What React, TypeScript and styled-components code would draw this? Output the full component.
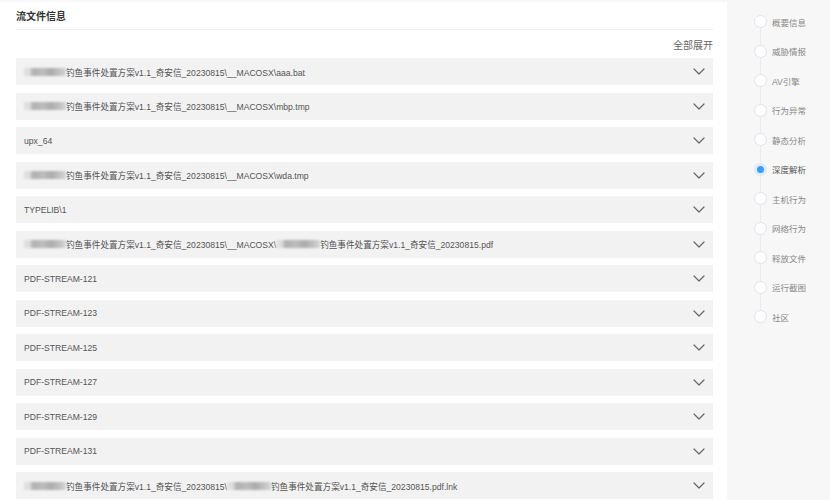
import React from "react";
import styled, { createGlobalStyle } from "styled-components";

const GlobalStyle = createGlobalStyle`
  html, body {
    margin: 0;
    padding: 0;
    background: #f7f7f7;
    font-family: "Liberation Sans", "Noto Sans CJK SC", Arial, sans-serif;
  }
`;

const Page = styled.div`
  display: flex;
  width: 830px;
  height: 500px;
  overflow: hidden;
`;

const Main = styled.section`
  width: 727px;
  margin-top: 2px;
  background: #fff;
  padding: 0 14px 0 16px;
  box-sizing: border-box;
`;

const Header = styled.div`
  height: 27px;
  border-bottom: 1px solid #f0f0f0;
  display: flex;
  align-items: center;
  font-size: 10px;
  font-weight: 700;
  color: #333;
`;

const Toolbar = styled.div`
  height: 28px;
  display: flex;
  align-items: center;
  justify-content: flex-end;
  font-size: 10px;
  color: #666;
  cursor: pointer;
`;

const List = styled.div`
  display: flex;
  flex-direction: column;
  gap: 7.5px;
`;

const Row = styled.div`
  height: 27px;
  flex-shrink: 0;
  background: #f2f2f2;
  display: flex;
  align-items: center;
  justify-content: space-between;
  padding: 0 8px;
  font-size: 8.6px;
  color: #555;
  white-space: nowrap;
`;

const Name = styled.span`
  display: flex;
  align-items: center;
`;

const Redact = styled.span<{ $w: number }>`
  display: inline-block;
  width: ${(p) => p.$w}px;
  height: 8px;
  background: linear-gradient(
    90deg,
    #e0e0e0 0%,
    #e0e0e0 12%,
    #b0b0b0 22%,
    #bdbdbd 45%,
    #acacac 65%,
    #c6c6c6 88%,
    #d8d8d8 100%
  );
  filter: blur(1px);
`;

const Chevron = () => (
  <svg width="12" height="7" viewBox="0 0 12 7">
    <polyline
      points="1,1 6,6 11,1"
      fill="none"
      stroke="#666"
      strokeWidth="1.2"
      strokeLinecap="round"
      strokeLinejoin="round"
    />
  </svg>
);

const Aside = styled.nav`
  flex: 1;
  padding: 7px 0 0 27px;
`;

const Step = styled.div<{ $last?: boolean }>`
  position: relative;
  height: 29.5px;
  display: flex;
  align-items: center;
  gap: 5px;

  &::after {
    content: "";
    display: ${(p) => (p.$last ? "none" : "block")};
    position: absolute;
    left: 6px;
    top: 50%;
    height: 100%;
    width: 1px;
    background: #ebebeb;
  }
`;

const Dot = styled.span<{ $active?: boolean }>`
  position: relative;
  z-index: 1;
  width: 13px;
  height: 13px;
  box-sizing: border-box;
  border-radius: 50%;
  background: ${(p) => (p.$active ? "#3b9cf2" : "#fff")};
  border: ${(p) => (p.$active ? "3px solid #dcecfb" : "1px solid #e0e3ec")};
`;

const StepLabel = styled.span<{ $active?: boolean }>`
  font-size: 8.5px;
  color: ${(p) => (p.$active ? "#555" : "#888")};
`;

const base = "钓鱼事件处置方案v1.1_奇安信_20230815";

const rows: React.ReactNode[] = [
  <><Redact $w={42} />{base}\__MACOSX\aaa.bat</>,
  <><Redact $w={42} />{base}\__MACOSX\mbp.tmp</>,
  <>upx_64</>,
  <><Redact $w={42} />{base}\__MACOSX\wda.tmp</>,
  <>TYPELIB\1</>,
  <>
    <Redact $w={42} />{base}\__MACOSX\<Redact $w={44} />{base}.pdf
  </>,
  <>PDF-STREAM-121</>,
  <>PDF-STREAM-123</>,
  <>PDF-STREAM-125</>,
  <>PDF-STREAM-127</>,
  <>PDF-STREAM-129</>,
  <>PDF-STREAM-131</>,
  <>
    <Redact $w={42} />{base}\<Redact $w={44} />{base}.pdf.lnk
  </>,
];

const steps = [
  "概要信息",
  "威胁情报",
  "AV引擎",
  "行为异常",
  "静态分析",
  "深度解析",
  "主机行为",
  "网络行为",
  "释放文件",
  "运行截图",
  "社区",
];

export default function App() {
  return (
    <Page>
      <GlobalStyle />
      <Main>
        <Header>流文件信息</Header>
        <Toolbar>全部展开</Toolbar>
        <List>
          {rows.map((r, i) => (
            <Row key={i}>
              <Name>{r}</Name>
              <Chevron />
            </Row>
          ))}
        </List>
      </Main>
      <Aside>
        {steps.map((s, i) => (
          <Step key={s} $last={i === steps.length - 1}>
            <Dot $active={s === "深度解析"} />
            <StepLabel $active={s === "深度解析"}>{s}</StepLabel>
          </Step>
        ))}
      </Aside>
    </Page>
  );
}
